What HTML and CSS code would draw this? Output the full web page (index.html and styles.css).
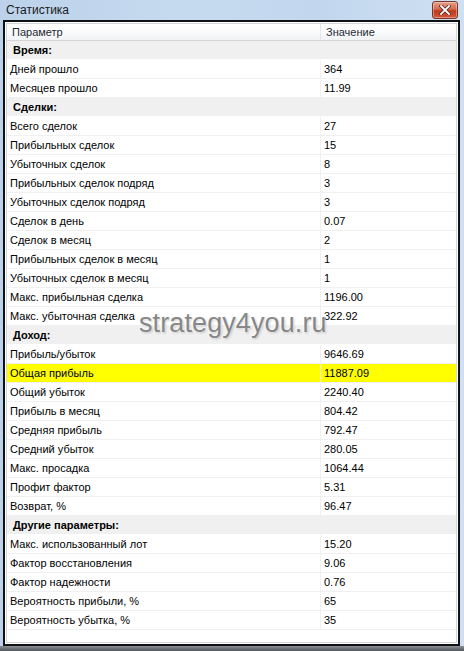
FILE: index.html
```html
<!DOCTYPE html>
<html lang="ru">
<head>
  <meta charset="UTF-8">
  <title>Статистика</title>
  <link rel="stylesheet" href="styles.css">
</head>
<body>
  <div class="window">
    <div class="titlebar">
      <span class="title">Статистика</span>
      <div class="close">
        <svg width="12" height="10" viewBox="0 0 12 10">
          <path d="M2 1 L10 9 M10 1 L2 9" stroke="#5a2a20" stroke-width="3.4" stroke-linecap="square"/>
          <path d="M2 1 L10 9 M10 1 L2 9" stroke="#fff" stroke-width="1.8" stroke-linecap="square"/>
        </svg>
      </div>
    </div>

    <div class="frame">
      <div class="panel">
        <div class="list">
          <div class="head">
            <div class="col">Параметр</div>
            <div class="col">Значение</div>
          </div>

          <div class="group">Время:</div>
          <div class="row"><div class="cell">Дней прошло</div><div class="cell">364</div></div>
          <div class="row"><div class="cell">Месяцев прошло</div><div class="cell">11.99</div></div>

          <div class="group">Сделки:</div>
          <div class="row"><div class="cell">Всего сделок</div><div class="cell">27</div></div>
          <div class="row"><div class="cell">Прибыльных сделок</div><div class="cell">15</div></div>
          <div class="row"><div class="cell">Убыточных сделок</div><div class="cell">8</div></div>
          <div class="row"><div class="cell">Прибыльных сделок подряд</div><div class="cell">3</div></div>
          <div class="row"><div class="cell">Убыточных сделок подряд</div><div class="cell">3</div></div>
          <div class="row"><div class="cell">Сделок в день</div><div class="cell">0.07</div></div>
          <div class="row"><div class="cell">Сделок в месяц</div><div class="cell">2</div></div>
          <div class="row"><div class="cell">Прибыльных сделок в месяц</div><div class="cell">1</div></div>
          <div class="row"><div class="cell">Убыточных сделок в месяц</div><div class="cell">1</div></div>
          <div class="row"><div class="cell">Макс. прибыльная сделка</div><div class="cell">1196.00</div></div>
          <div class="row"><div class="cell">Макс. убыточная сделка</div><div class="cell">322.92</div></div>

          <div class="group">Доход:</div>
          <div class="row"><div class="cell">Прибыль/убыток</div><div class="cell">9646.69</div></div>
          <div class="row selected"><div class="cell">Общая прибыль</div><div class="cell">11887.09</div></div>
          <div class="row"><div class="cell">Общий убыток</div><div class="cell">2240.40</div></div>
          <div class="row"><div class="cell">Прибыль в месяц</div><div class="cell">804.42</div></div>
          <div class="row"><div class="cell">Средняя прибыль</div><div class="cell">792.47</div></div>
          <div class="row"><div class="cell">Средний убыток</div><div class="cell">280.05</div></div>
          <div class="row"><div class="cell">Макс. просадка</div><div class="cell">1064.44</div></div>
          <div class="row"><div class="cell">Профит фактор</div><div class="cell">5.31</div></div>
          <div class="row"><div class="cell">Возврат, %</div><div class="cell">96.47</div></div>

          <div class="group">Другие параметры:</div>
          <div class="row"><div class="cell">Макс. использованный лот</div><div class="cell">15.20</div></div>
          <div class="row"><div class="cell">Фактор восстановления</div><div class="cell">9.06</div></div>
          <div class="row"><div class="cell">Фактор надежности</div><div class="cell">0.76</div></div>
          <div class="row"><div class="cell">Вероятность прибыли, %</div><div class="cell">65</div></div>
          <div class="row"><div class="cell">Вероятность убытка, %</div><div class="cell">35</div></div>
          <div class="filler"></div>
        </div>
      </div>
    </div>
    <div class="bottom"></div>

    <div class="watermark">strategy4you.ru</div>
  </div>
</body>
</html>
```

FILE: styles.css
```css
* {
  margin: 0;
  padding: 0;
  box-sizing: border-box;
}

body {
  font-family: "Liberation Sans", Arial, sans-serif;
  font-size: 11px;
  color: #000;
  background: #4f5458;
}

.window {
  position: relative;
  width: 464px;
  height: 651px;
  display: flex;
  flex-direction: column;
  background: linear-gradient(90deg, #bcd2ea 0%, #c6daef 40%, #c2d7ee 70%, #cfe0f2 100%);
}

/* Заголовок окна */
.titlebar {
  height: 20px;
  display: flex;
  align-items: center;
  justify-content: space-between;
  padding: 0 6px 1px 6px;
}

.title {
  font-size: 12px;
  color: #1a1a1a;
}

.close {
  width: 26px;
  height: 18px;
  margin-top: 1px;
  border: 1px solid #7a3526;
  border-radius: 3px;
  background: linear-gradient(180deg, #e8a08a 0%, #d46a4e 45%, #c0391c 55%, #d2583a 100%);
  display: flex;
  align-items: center;
  justify-content: center;
  box-shadow: inset 0 0 0 1px rgba(255, 255, 255, 0.35);
}

/* Рамка и таблица */
.frame {
  flex: 1;
  padding: 0 4px 0 3px;
  display: flex;
}

.panel {
  flex: 1;
  border: 2px solid #111;
  background: #fff;
  padding: 1px;
  display: flex;
}

.list {
  flex: 1;
  border: 1px solid #cfd6dc;
  background: #fff;
  display: flex;
  flex-direction: column;
}

.head {
  display: grid;
  grid-template-columns: 313px 1fr;
  height: 17px;
  background: linear-gradient(180deg, #ffffff 0%, #fafbfc 50%, #f1f2f4 100%);
  border-bottom: 1px solid #d5d5d5;
}

.head .col {
  padding-left: 5px;
  line-height: 16px;
  color: #1e2a36;
}

.head .col + .col {
  border-left: 1px solid #e3e5e8;
}

.group {
  height: 19px;
  line-height: 18px;
  padding-left: 6px;
  font-weight: bold;
  background: #f0f0f0;
  border-bottom: 1px solid #fff;
}

.row {
  display: grid;
  grid-template-columns: 313px 1fr;
  height: 19px;
  border-bottom: 1px solid #f0f0f0;
}

.cell {
  padding-left: 3px;
  line-height: 18px;
  white-space: nowrap;
}

.cell + .cell {
  border-left: 1px solid #f0f0f0;
}

.row.selected {
  background: #ffff00;
}

.filler {
  height: 11px;
}

.bottom {
  height: 5px;
  background: linear-gradient(180deg, #8a9096 0%, #50565b 100%);
}

.watermark {
  position: absolute;
  left: 139px;
  top: 308px;
  font-size: 27px;
  color: #878787;
  text-shadow: 0 0 2px #fff, 0 0 3px #fff, 1px 1px 2px rgba(0, 0, 0, 0.3);
  letter-spacing: 0.1px;
}
```
